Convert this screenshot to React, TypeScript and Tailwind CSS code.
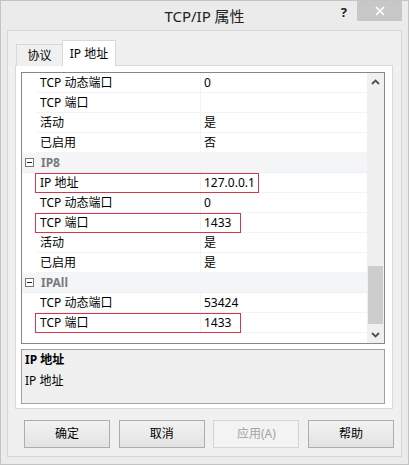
import React from "react";

type Row =
  | { kind: "cat"; label: string }
  | { kind: "prop"; label: string; value: string; mark?: number };

const ROWS: Row[] = [
  { kind: "prop", label: "TCP 动态端口", value: "0" },
  { kind: "prop", label: "TCP 端口", value: "" },
  { kind: "prop", label: "活动", value: "是" },
  { kind: "prop", label: "已启用", value: "否" },
  { kind: "cat", label: "IP8" },
  { kind: "prop", label: "IP 地址", value: "127.0.0.1", mark: 224 },
  { kind: "prop", label: "TCP 动态端口", value: "0" },
  { kind: "prop", label: "TCP 端口", value: "1433", mark: 206 },
  { kind: "prop", label: "活动", value: "是" },
  { kind: "prop", label: "已启用", value: "是" },
  { kind: "cat", label: "IPAll" },
  { kind: "prop", label: "TCP 动态端口", value: "53424" },
  { kind: "prop", label: "TCP 端口", value: "1433", mark: 206 },
];

const FONT = { fontFamily: '"Segoe UI", "Noto Sans", "Noto Sans CJK SC", sans-serif' };

const Chevron = ({ up }: { up?: boolean }) => (
  <svg width="9" height="6" viewBox="0 0 9 6">
    <polyline
      points={up ? "1,5 4.5,1.5 8,5" : "1,1 4.5,4.5 8,1"}
      fill="none"
      stroke="#505050"
      strokeWidth="1.8"
    />
  </svg>
);

const GridRow = ({ row }: { row: Row }) => {
  if (row.kind === "cat") {
    return (
      <div className="flex h-[20px] items-center bg-[#f4f5f7] border-b border-[#eef0f3]">
        <div className="w-[14px] shrink-0 flex justify-center pl-[1px]">
          <div className="w-[9px] h-[9px] border border-[#7a7a7a] bg-white flex items-center justify-center">
            <div className="w-[5px] h-px bg-[#202020]" />
          </div>
        </div>
        <span className="pl-[5px] font-bold text-[#7a7a7a]">{row.label}</span>
      </div>
    );
  }
  return (
    <div className="relative flex h-[20px] items-center">
      <div className="w-[14px] shrink-0 self-stretch" />
      <div className="flex flex-1 self-stretch items-center border-b border-[#f3f3f3]">
        <div className="w-[165px] shrink-0 self-stretch flex items-center pl-[4px] border-r border-[#f3f3f3]">
          {row.label}
        </div>
        <div className="flex-1 pl-[3px]">{row.value}</div>
      </div>
      {row.mark ? (
        <div
          className="absolute left-[13px] top-0 h-[20px] border border-[#cf3a4e]"
          style={{ width: row.mark }}
        />
      ) : null}
    </div>
  );
};

const Button = ({ label, disabled }: { label: string; disabled?: boolean }) => (
  <div
    className={
      "w-[86px] h-[28px] flex items-center justify-center border text-[12px] " +
      (disabled
        ? "border-[#d4d4d4] bg-[#f3f3f3] text-[#a3a3a3]"
        : "border-[#adadad] bg-gradient-to-b from-[#f2f2f2] to-[#e3e3e3] text-black")
    }
  >
    {label}
  </div>
);

export default function App() {
  return (
    <div
      className="w-[409px] h-[465px] bg-[#ebebeb] border border-[#c4c4c4] flex flex-col text-[12px] text-black"
      style={FONT}
    >
      <div className="h-[29px] shrink-0 grid grid-cols-[1fr_auto_1fr] items-start">
        <div />
        <div className="pt-[4px] text-[15px] text-[#222]">TCP/IP 属性</div>
        <div className="flex justify-end items-start pr-[6px]">
          <span className="mt-[2px] mr-[10px] text-[13px] font-bold text-[#222]">?</span>
          <div className="w-[45px] h-[20px] bg-[#c7c7c7] flex items-center justify-center">
            <svg width="10" height="10" viewBox="0 0 10 10">
              <path d="M1 1L9 9M9 1L1 9" stroke="#fff" strokeWidth="1.6" />
            </svg>
          </div>
        </div>
      </div>

      <div className="flex-1 mx-[6px] mb-[7px] border border-[#d6d6d6] bg-[#f0f0f0] flex flex-col pl-[7px] pr-[8px] pt-[9px]">
        <div className="flex items-end h-[26px] relative z-10 -mb-px pl-px">
          <div className="h-[22px] w-[47px] border border-b-0 border-[#d9d9d9] bg-[#f0f0f0] flex items-center justify-center pt-[1px] text-[12px]">
            协议
          </div>
          <div className="h-[26px] w-[54px] border border-b-0 border-[#d9d9d9] bg-white flex items-center justify-center text-[12px] -ml-px">
            IP 地址
          </div>
        </div>

        <div className="h-[344px] border border-[#d9d9d9] bg-white flex flex-col pl-[5px] pr-[7px] pt-[6px]">
          <div className="h-[272px] border border-[#828790] flex">
            <div className="flex-1 flex flex-col overflow-hidden">
              {ROWS.map((r, i) => (
                <GridRow key={i} row={r} />
              ))}
            </div>
            <div className="w-[17px] shrink-0 bg-[#f0f0f0] flex flex-col">
              <div className="h-[17px] flex items-center justify-center">
                <Chevron up />
              </div>
              <div className="flex-1 px-[1px]">
                <div className="mt-[176px] h-[58px] bg-[#cdcdcd]" />
              </div>
              <div className="h-[17px] flex items-center justify-center">
                <Chevron />
              </div>
            </div>
          </div>

          <div className="mt-[5px] h-[55px] border border-[#a0a0a0] bg-[#f0f0f0] px-[3px] pt-[1px]">
            <div className="font-bold leading-[18px]">IP 地址</div>
            <div className="mt-[3px] leading-[18px]">IP 地址</div>
          </div>
        </div>

        <div className="flex justify-between pl-[9px] mt-[11px] mr-[-1px]">
          <Button label="确定" />
          <Button label="取消" />
          <Button label="应用(A)" disabled />
          <Button label="帮助" />
        </div>
      </div>
    </div>
  );
}
